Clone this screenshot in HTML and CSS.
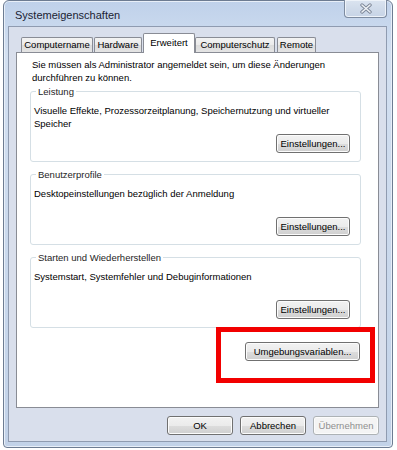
FILE: index.html
```html
<!DOCTYPE html>
<html lang="de">
<head>
  <meta charset="UTF-8">
  <meta name="viewport" content="width=device-width, initial-scale=1.0">
  <title>Systemeigenschaften</title>
  <link rel="stylesheet" href="styles.css">
</head>
<body>

  <div class="window">
    <!-- Titelleiste -->
    <div class="titlebar">
      <span class="title">Systemeigenschaften</span>
      <div class="close-button">
        <svg width="14" height="11" viewBox="0 0 14 11">
          <path d="M3 2 L11 9 M11 2 L3 9" stroke="#7b8597" stroke-width="3.4" stroke-linecap="round" fill="none"/>
          <path d="M3 2 L11 9 M11 2 L3 9" stroke="#eef1f5" stroke-width="1.6" stroke-linecap="round" fill="none"/>
        </svg>
      </div>
    </div>

    <div class="dialog">
      <!-- Registerkarten -->
      <div class="tabs">
        <div class="tab tab-name">Computername</div>
        <div class="tab tab-hardware">Hardware</div>
        <div class="tab tab-active">Erweitert</div>
        <div class="tab tab-schutz">Computerschutz</div>
        <div class="tab tab-remote">Remote</div>
      </div>

      <div class="panel">
        <p class="intro">Sie müssen als Administrator angemeldet sein, um diese Änderungen durchführen zu können.</p>

        <fieldset class="group">
          <legend>Leistung</legend>
          <div class="group-body">
            <div>Visuelle Effekte, Prozessorzeitplanung, Speichernutzung und virtueller Speicher</div>
            <button class="btn btn-settings">Einstellungen...</button>
          </div>
        </fieldset>

        <fieldset class="group">
          <legend>Benutzerprofile</legend>
          <div class="group-body">
            <div>Desktopeinstellungen bezüglich der Anmeldung</div>
            <button class="btn btn-settings">Einstellungen...</button>
          </div>
        </fieldset>

        <fieldset class="group">
          <legend>Starten und Wiederherstellen</legend>
          <div class="group-body">
            <div>Systemstart, Systemfehler und Debuginformationen</div>
            <button class="btn btn-settings">Einstellungen...</button>
          </div>
        </fieldset>

        <div class="env-row">
          <button class="btn btn-env">Umgebungsvariablen...</button>
        </div>

        <!-- Markierung -->
        <div class="highlight"></div>
      </div>

      <div class="actions">
        <button class="btn btn-action">OK</button>
        <button class="btn btn-action">Abbrechen</button>
        <button class="btn btn-action" disabled>Übernehmen</button>
      </div>
    </div>
  </div>

</body>
</html>
```

FILE: styles.css
```css
body {
  margin: 0;
  padding: 0;
  background-color: #fff;
  font-family: "Liberation Sans", Arial, sans-serif;
  font-size: 9.5px;
  color: #000;
}

.window {
  margin-left: 3px;
  width: 390px;
  height: 448px;
  box-sizing: border-box;
  border: 1px solid #6d7c92;
  border-radius: 6px 6px 4px 4px;
  background: linear-gradient(180deg, #bfd1ea 0%, #d3e0f1 12%, #c9d8ec 60%, #c2d2e8 100%);
  padding: 0 5px 5px 4px;
  box-shadow: inset 0 0 0 1px #e8eff8;
}

.titlebar {
  height: 25px;
  display: flex;
  justify-content: space-between;
  align-items: flex-start;
}

.title {
  padding-left: 7px;
  padding-top: 8px;
  font-size: 11px;
  color: #1b2333;
}

.close-button {
  margin-top: -1px;
  width: 43px;
  height: 18px;
  box-sizing: border-box;
  border: 1px solid #7d8ba0;
  border-top: none;
  border-radius: 0 0 4px 4px;
  background: linear-gradient(180deg, #dbe4f0 0%, #d0dbea 50%, #c7d4e6 100%);
  box-shadow: inset 0 0 0 1px #eef3f9;
  display: flex;
  justify-content: center;
  align-items: center;
}

.dialog {
  height: 416px;
  box-sizing: border-box;
  border: 1px solid #8f9bb0;
  background-color: #d9dfec;
  padding: 6px 7px 6px 7px;
}

.tabs {
  height: 19px;
  display: flex;
  align-items: flex-end;
  padding-left: 5px;
}

.tab {
  height: 15px;
  box-sizing: border-box;
  border: 1px solid #898c95;
  border-bottom: none;
  border-radius: 2px 2px 0 0;
  background: linear-gradient(180deg, #f3f3f3 0%, #ebebeb 50%, #dcdcdc 51%, #e4e4e4 100%);
  text-align: center;
  line-height: 14px;
  margin-right: 1px;
}

.tab-name {
  width: 72px;
}

.tab-hardware {
  width: 48px;
}

.tab-schutz {
  width: 80px;
  margin-right: 2px;
}

.tab-remote {
  width: 39px;
}

.tab-active {
  position: relative;
  z-index: 2;
  width: 52px;
  height: 20px;
  margin-bottom: -1px;
  margin-right: 0;
  background: #fff;
  line-height: 17px;
}

.panel {
  position: relative;
  height: 356px;
  box-sizing: border-box;
  border: 1px solid #898c95;
  background-color: #fff;
  padding: 5px 17px 0 13px;
}

.intro {
  margin: 0 0 1px 2px;
  line-height: 13px;
}

.group {
  margin: 0 0 6px 0;
  padding: 0 10px 8px 3px;
  border: 1px solid #d5dfe5;
  border-radius: 3px;
  min-inline-size: 0;
}

.group legend {
  margin-left: 2px;
  padding: 0 2px;
  line-height: 13px;
  color: #1e1e1e;
}

.group-body {
  height: 55px;
  box-sizing: border-box;
  padding-top: 6px;
  display: flex;
  flex-direction: column;
  line-height: 13px;
}

.btn {
  font-family: "Liberation Sans", Arial, sans-serif;
  font-size: 9.5px;
  color: #000;
  height: 19px;
  box-sizing: border-box;
  padding: 0;
  border: 1px solid #707070;
  border-radius: 3px;
  background: linear-gradient(180deg, #f2f2f2 0%, #ebebeb 50%, #dddddd 51%, #cfcfcf 100%);
  box-shadow: inset 0 0 0 1px #fcfcfc;
}

.btn:disabled {
  color: #8f8f8f;
  border-color: #adb2b5;
  background: #f4f4f4;
}

.btn-settings {
  margin-top: auto;
  align-self: flex-end;
  width: 74px;
}

.env-row {
  display: flex;
  justify-content: flex-end;
  padding-top: 8px;
  padding-right: 1px;
}

.btn-env {
  width: 115px;
}

.highlight {
  position: absolute;
  left: 199px;
  top: 274px;
  width: 159px;
  height: 56px;
  box-sizing: border-box;
  border: 5px solid #f20000;
}

.actions {
  display: flex;
  justify-content: flex-end;
  gap: 7px;
  margin-top: 8px;
}

.btn-action {
  width: 66px;
}
```
